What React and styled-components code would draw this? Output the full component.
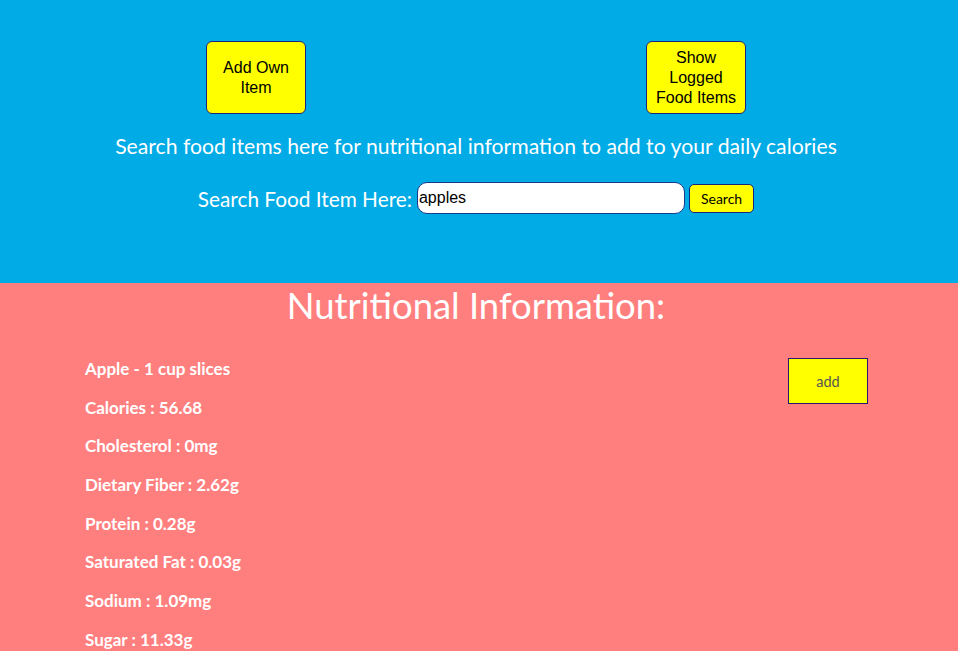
import React, { useState } from 'react';
import styled, { createGlobalStyle } from 'styled-components';

const GlobalStyle = createGlobalStyle`
	body {
		margin: 0;
		font-family: 'Lato', 'Open Sans', sans-serif;
		background: #ff7f7f;
	}
`;

const nutrients = [
	'Apple - 1 cup slices',
	'Calories : 56.68',
	'Cholesterol : 0mg',
	'Dietary Fiber : 2.62g',
	'Protein : 0.28g',
	'Saturated Fat : 0.03g',
	'Sodium : 1.09mg',
	'Sugar : 11.33g'
];

export default function App() {
	const [query, setQuery] = useState('apples');
	return (
		<Page>
			<GlobalStyle />
			<SearchSection>
				<ButtonRow>
					<BigButton>Add Own Item</BigButton>
					<BigButton>Show Logged Food Items</BigButton>
				</ButtonRow>
				<Intro>
					Search food items here for nutritional information to add to your daily calories
				</Intro>
				<SearchForm onSubmit={e => e.preventDefault()}>
					<label htmlFor='food'>Search Food Item Here:</label>
					<SearchInput
						id='food'
						value={query}
						onChange={e => setQuery(e.target.value)}
					/>
					<SearchButton type='submit'>Search</SearchButton>
				</SearchForm>
			</SearchSection>
			<ResultSection>
				<Title>Nutritional Information:</Title>
				<ResultRow>
					<NutrientList>
						{nutrients.map((n, i) => (
							<li key={i}>{n}</li>
						))}
					</NutrientList>
					<AddButton>add</AddButton>
				</ResultRow>
			</ResultSection>
		</Page>
	);
}

const Page = styled.div`
	min-height: 100vh;
	background: #ff7f7f;
`;

const SearchSection = styled.section`
	background: #00abe6;
	height: 283px;
	box-sizing: border-box;
	padding: 41px 6px 0 0;
	display: flex;
	flex-direction: column;
	align-items: center;
	color: #fff;
`;

const ButtonRow = styled.div`
	display: flex;
	justify-content: center;
	gap: 340px;
`;

const BigButton = styled.button`
	width: 100px;
	height: 73px;
	background: #ffff00;
	border: 1px solid #1a237e;
	border-radius: 6px;
	font-family: 'Liberation Sans', Arial, sans-serif;
	font-size: 16px;
	line-height: 20px;
	color: #000;
	padding: 0 4px;
`;

const Intro = styled.p`
	margin: 20px 0 0;
	font-size: 21.2px;
	line-height: 24px;
`;

const SearchForm = styled.form`
	margin-top: 24px;
	display: flex;
	align-items: center;
	font-size: 20.8px;
	label {
		margin-right: 5px;
	}
`;

const SearchInput = styled.input`
	width: 268px;
	height: 32px;
	box-sizing: border-box;
	border: 1px solid #1a3a8a;
	border-radius: 10px;
	padding: 0 1px;
	font-family: 'Liberation Sans', Arial, sans-serif;
	font-size: 16px;
	color: #000;
	outline: none;
`;

const SearchButton = styled.button`
	margin-left: 4px;
	height: 29px;
	padding: 0 11px;
	background: #ffff00;
	border: 1px solid #1a237e;
	border-radius: 5px;
	font-family: inherit;
	font-size: 14px;
	color: #000;
`;

const ResultSection = styled.section`
	padding: 0 6px 0 0;
	color: #fff;
`;

const Title = styled.h1`
	margin: 0;
	padding-top: 0;
	text-align: center;
	font-size: 36.4px;
	font-weight: 400;
	line-height: 44px;
`;

const ResultRow = styled.div`
	display: flex;
	justify-content: space-between;
	align-items: flex-start;
	padding: 32px 84px 0 85px;
`;

const NutrientList = styled.ul`
	list-style: none;
	margin: 0;
	padding: 0;
	li {
		font-size: 17px;
		font-weight: 700;
		line-height: 20px;
		margin-bottom: 18.7px;
	}
`;

const AddButton = styled.button`
	margin-top: -1px;
	width: 80px;
	height: 46px;
	background: #ffff00;
	border: 1px solid #2a1a6e;
	border-radius: 0;
	font-family: inherit;
	font-size: 14.5px;
	color: #555;
`;
